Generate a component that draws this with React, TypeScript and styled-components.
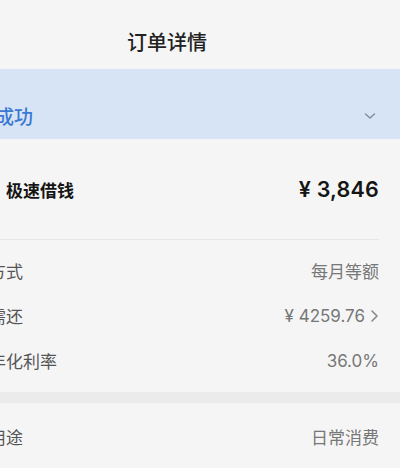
import React from "react";
import styled, { createGlobalStyle } from "styled-components";

const Global = createGlobalStyle`
  html, body { margin: 0; padding: 0; background: #f5f5f5; overflow: hidden; }
  body { font-family: Inter, "Noto Sans CJK SC", sans-serif; -webkit-font-smoothing: antialiased; }
`;

const Page = styled.div`
  width: 466px;
  margin-left: -66px;
  background: #f5f5f5;
`;

const Header = styled.header`
  height: 69px;
  display: flex;
  align-items: flex-end;
  justify-content: center;
  box-sizing: border-box;
`;

const Title = styled.h1`
  margin: 0 0 12px;
  font-size: 20px;
  font-weight: 500;
  color: #222;
  line-height: 28px;
`;

const StatusBand = styled.div`
  height: 70px;
  background: #d6e4f5;
  display: flex;
  align-items: center;
  justify-content: space-between;
  padding: 0 21px;
  box-sizing: border-box;
`;

const StatusText = styled.span`
  font-size: 19px;
  font-weight: 500;
  color: #3b78d4;
  padding-top: 22px;
  margin-left: 2px;
`;

const Chevron = styled.svg`
  width: 14px;
  height: 14px;
  margin-top: 24px;
  margin-right: 2px;
`;

const Section = styled.section`
  padding: 0 21px;
`;

const ProductRow = styled.div`
  height: 100px;
  display: flex;
  align-items: center;
  justify-content: space-between;
  border-bottom: 1px solid #e6e6e6;
`;

const ProductName = styled.div`
  display: flex;
  align-items: center;
  gap: 11px;
  font-size: 17px;
  font-weight: 700;
  color: #151515;
`;

const Logo = styled.div`
  width: 40px;
  height: 40px;
  border-radius: 10px;
  background: #3b78d4;
`;

const Amount = styled.div`
  font-size: 21.5px;
  font-weight: 600;
  color: #151515;
  letter-spacing: 0.2px;
`;

const Rows = styled.div<{ $top: number; $bottom: number }>`
  padding: ${(p) => p.$top}px 0 ${(p) => p.$bottom}px;
`;

const Row = styled.div`
  height: 45px;
  display: flex;
  align-items: center;
  justify-content: space-between;
  font-size: 17px;
`;

const Label = styled.span`
  color: #555;
`;

const Value = styled.span`
  color: #777;
  display: flex;
  align-items: center;
  gap: 5px;
`;

const Gap = styled.div`
  height: 11px;
  background: #ebebeb;
`;

const Arrow = () => (
  <svg width="9" height="14" viewBox="0 0 9 14">
    <path d="M2 2l5 5-5 5" fill="none" stroke="#888" strokeWidth="1.6" strokeLinecap="round" strokeLinejoin="round" />
  </svg>
);

export default function App() {
  return (
    <Page>
      <Global />
      <Header>
        <Title>订单详情</Title>
      </Header>
      <StatusBand>
        <StatusText>放款成功</StatusText>
        <Chevron viewBox="0 0 14 14">
          <path d="M2.5 5l4.5 4 4.5-4" fill="none" stroke="#7f8a99" strokeWidth="1.4" strokeLinecap="round" strokeLinejoin="round" />
        </Chevron>
      </StatusBand>
      <Section>
        <ProductRow>
          <ProductName>
            <Logo />
            极速借钱
          </ProductName>
          <Amount>¥ 3,846</Amount>
        </ProductRow>
        <Rows $top={8} $bottom={9}>
          <Row>
            <Label>还款方式</Label>
            <Value>每月等额</Value>
          </Row>
          <Row>
            <Label>总计需还</Label>
            <Value>
              ¥ 4259.76 <Arrow />
            </Value>
          </Row>
          <Row>
            <Label>参考年化利率</Label>
            <Value>36.0%</Value>
          </Row>
        </Rows>
      </Section>
      <Gap />
      <Section>
        <Rows $top={11} $bottom={0}>
          <Row>
            <Label>借款用途</Label>
            <Value>日常消费</Value>
          </Row>
        </Rows>
      </Section>
    </Page>
  );
}
